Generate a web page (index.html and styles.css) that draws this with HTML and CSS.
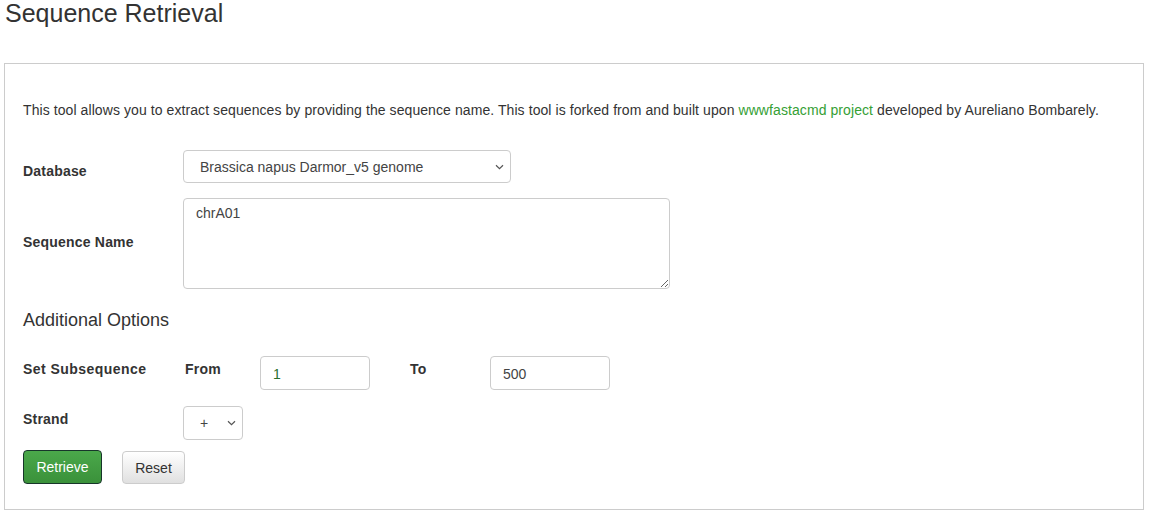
FILE: index.html
```html
<!DOCTYPE html>
<html>
<head>
<meta charset="utf-8">
<link rel="stylesheet" href="styles.css">
</head>
<body>
<h2 class="title">Sequence Retrieval</h2>
<div class="panel">
  <p class="desc">This tool allows you to extract sequences by providing the sequence name. This tool is forked from and built upon <a href="#">wwwfastacmd project</a> developed by Aureliano Bombarely.</p>
  <div class="row row-db">
    <label class="lbl">Database</label>
    <select class="sel sel-db"><option>Brassica napus Darmor_v5 genome</option></select>
  </div>
  <div class="row row-seq">
    <label class="lbl">Sequence Name</label>
    <textarea class="ta">chrA01</textarea>
  </div>
  <h4 class="sub">Additional Options</h4>
  <div class="row row-subseq">
    <label class="lbl lbl-wide">Set Subsequence</label>
    <label class="lbl lbl-from">From</label>
    <input class="inp inp-from" type="text" value="1">
    <label class="lbl lbl-to">To</label>
    <input class="inp inp-to" type="text" value="500">
  </div>
  <div class="row row-strand">
    <label class="lbl">Strand</label>
    <select class="sel sel-strand"><option>+</option></select>
  </div>
  <div class="btns">
    <button class="btn btn-go">Retrieve</button>
    <button class="btn btn-reset">Reset</button>
  </div>
</div>
</body>
</html>
```

FILE: styles.css
```css
html, body {
  margin: 0;
  padding: 0;
  background: #fff;
}
body {
  font-family: "Liberation Sans", Arial, sans-serif;
  font-size: 14px;
  color: #333;
  padding: 0 5px 0 4px;
}
.title {
  margin: 0;
  padding: 0 0 0 1px;
  font-size: 25px;
  font-weight: normal;
  line-height: 27px;
  color: #333;
}
.panel {
  margin-top: 36px;
  height: 445px;
  border: 1px solid #ccc;
  padding: 0 0 0 18px;
  box-sizing: content-box;
  width: 1120px;
}
.desc {
  margin: 0;
  padding-top: 36px;
  line-height: 20px;
  font-size: 14px;
  letter-spacing: 0.08px;
}
.desc a {
  color: #35a035;
  text-decoration: none;
}
.row {
  display: flex;
  align-items: center;
}
.lbl {
  font-weight: bold;
  font-size: 14px;
  color: #333;
  letter-spacing: 0.2px;
}
.row > .lbl:first-child {
  width: 160px;
  flex: none;
}
.row-db {
  margin-top: 30px;
}
.row-db .lbl {
  padding-top: 8px;
}
.sel {
  -webkit-appearance: none;
  appearance: none;
  font-family: "Liberation Sans", Arial, sans-serif;
  font-size: 14px;
  color: #444;
  background-color: #fff;
  background-image: url("data:image/svg+xml,%3Csvg xmlns='http://www.w3.org/2000/svg' width='9' height='6' viewBox='0 0 9 6'%3E%3Cpath d='M1 1.2 L4.5 4.6 L8 1.2' fill='none' stroke='%23555' stroke-width='1.2'/%3E%3C/svg%3E");
  background-repeat: no-repeat;
  border: 1px solid #ccc;
  border-radius: 4px;
  box-sizing: border-box;
}
.sel-db {
  width: 328px;
  height: 33px;
  padding: 0 10px 0 16px;
  background-position: right 6px center;
}
.row-seq {
  margin-top: 15px;
}
.row-seq .lbl {
  margin-top: -4px;
}
.ta {
  width: 487px;
  height: 91px;
  box-sizing: border-box;
  border: 1px solid #ccc;
  border-radius: 4px;
  padding: 6px 12px;
  font-family: "Liberation Sans", Arial, sans-serif;
  font-size: 14px;
  color: #444;
  resize: both;
}
.sub {
  margin: 19px 0 0 0;
  font-size: 18px;
  font-weight: normal;
  line-height: 24px;
  color: #333;
}
.row-subseq {
  margin-top: 24px;
}
.row-subseq .lbl {
  margin-top: -9px;
}
.row.row-subseq > .lbl-wide {
  width: 162px;
  letter-spacing: 0.45px;
}
.lbl-from {
  width: 75px;
}
.lbl-to {
  width: 80px;
  margin-left: 40px;
}
.inp {
  height: 34px;
  box-sizing: border-box;
  border: 1px solid #ccc;
  border-radius: 4px;
  padding: 2px 12px 0;
  font-family: "Liberation Sans", Arial, sans-serif;
  font-size: 14px;
  color: #444;
}
.inp-from {
  width: 110px;
  color: #2b6e2b;
}
.inp-to {
  width: 120px;
}
.row-strand {
  margin-top: 16px;
}
.row-strand .lbl {
  margin-top: -9px;
}
.sel-strand {
  width: 60px;
  height: 34px;
  padding: 0 6px 0 16px;
  background-position: right 6px center;
}
.btns {
  display: flex;
  margin-top: 10px;
  gap: 20px;
  align-items: flex-start;
}
.btn {
  height: 34px;
  box-sizing: border-box;
  font-family: "Liberation Sans", Arial, sans-serif;
  font-size: 14px;
  border-radius: 4px;
  padding: 0 12px;
  cursor: pointer;
}
.btn-go {
  width: 79px;
  color: #fff;
  background: linear-gradient(#4aa84a, #3a913a);
  border: 1px solid #17352a;
}
.btn-reset {
  width: 63px;
  height: 33px;
  margin-top: 1px;
  color: #333;
  background: linear-gradient(#fff, #e0e0e0);
  border: 1px solid #ccc;
}
```
